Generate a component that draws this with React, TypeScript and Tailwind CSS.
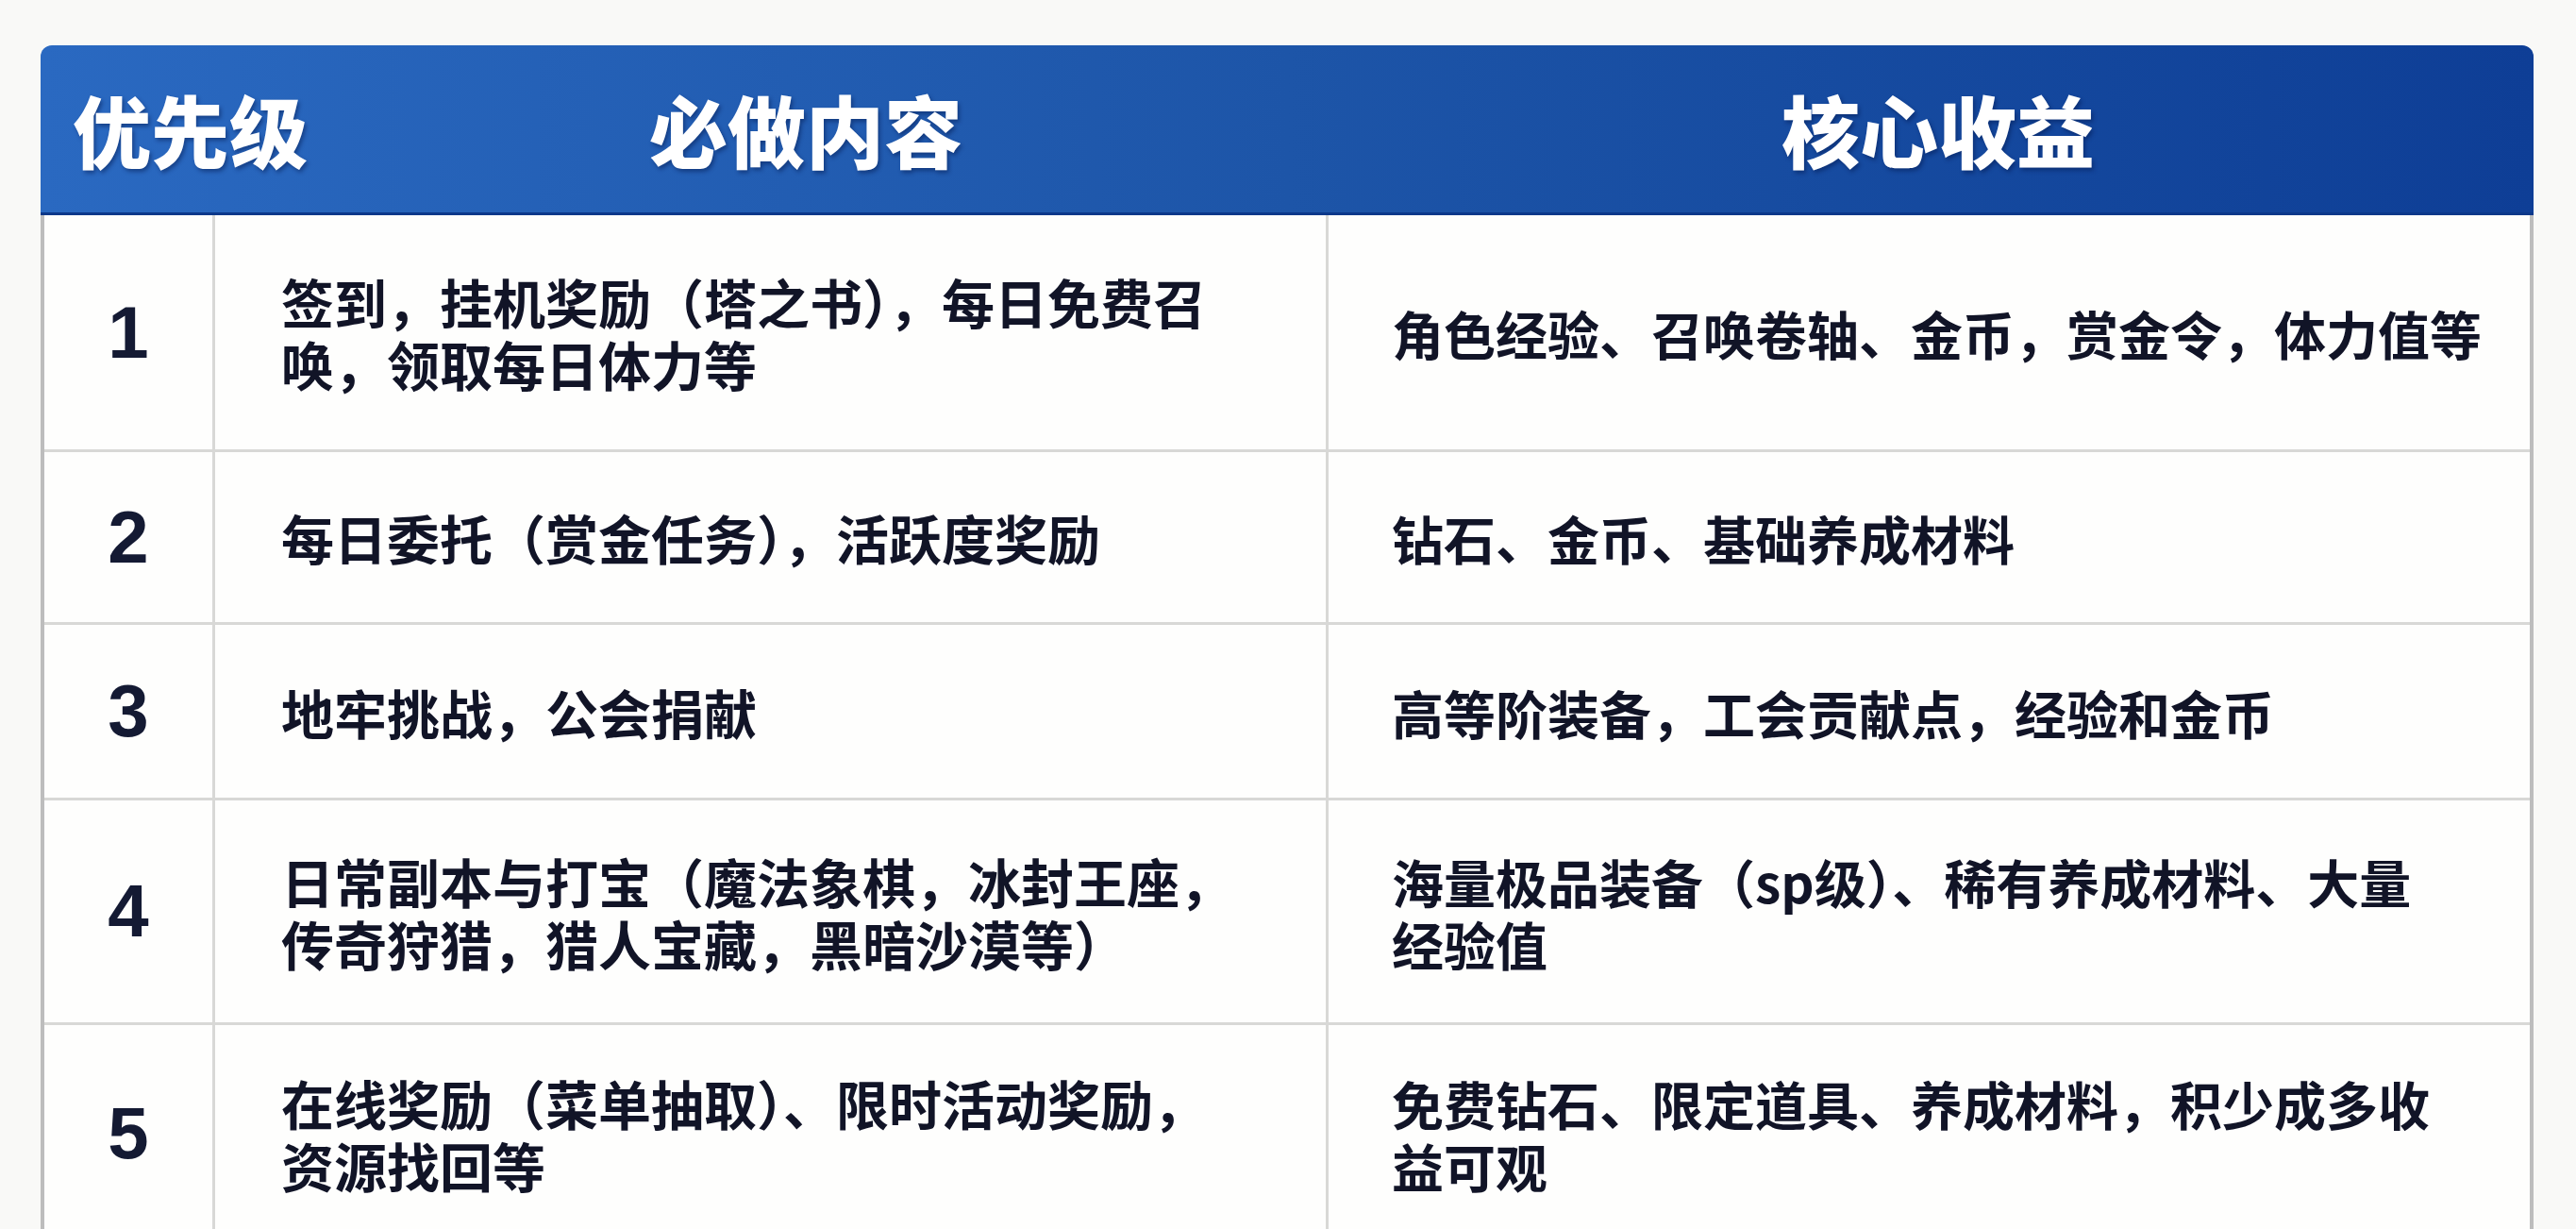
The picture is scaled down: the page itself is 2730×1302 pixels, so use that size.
import React from 'react';

interface Row {
  level: number;
  tasks: string[];
  gains: string[];
  height: string;
}

const rows: Row[] = [
  {
    level: 1,
    tasks: ['签到，挂机奖励（塔之书），每日免费召', '唤，领取每日体力等'],
    gains: ['角色经验、召唤卷轴、金币，赏金令，体力值等'],
    height: 'h-[251px]',
  },
  {
    level: 2,
    tasks: ['每日委托（赏金任务），活跃度奖励'],
    gains: ['钻石、金币、基础养成材料'],
    height: 'h-[183px]',
  },
  {
    level: 3,
    tasks: ['地牢挑战，公会捐献'],
    gains: ['高等阶装备，工会贡献点，经验和金币'],
    height: 'h-[186px]',
  },
  {
    level: 4,
    tasks: ['日常副本与打宝（魔法象棋，冰封王座，', '传奇狩猎，猎人宝藏，黑暗沙漠等）'],
    gains: ['海量极品装备（sp级）、稀有养成材料、大量', '经验值'],
    height: 'h-[238px]',
  },
  {
    level: 5,
    tasks: ['在线奖励（菜单抽取）、限时活动奖励，', '资源找回等'],
    gains: ['免费钻石、限定道具、养成材料，积少成多收', '益可观'],
    height: 'h-[232px]',
  },
];

const cjk = "font-['Noto_Sans_CJK_SC','Noto_Sans',sans-serif]";

function Lines({ lines, size }: { lines: string[]; size: string }) {
  return (
    <div className={`${cjk} font-semibold ${size} leading-[66px] text-[#111427] whitespace-nowrap`}>
      {lines.map((line, i) => (
        <div key={i}>{line}</div>
      ))}
    </div>
  );
}

export default function App() {
  return (
    <div className="min-h-screen bg-[#f9f9f7] pt-[48px] px-[43px]">
      <div className="w-[2642px]">
        {/* header */}
        <div className="flex items-center h-[180px] rounded-t-[12px] bg-linear-to-r from-[#2a69c1] via-[#1d55a8] to-[#0e3e96] border-b-[3px] border-[#0c388a] text-white font-black text-[83px] leading-none [text-shadow:2px_3px_4px_rgba(0,20,70,0.45)]">
          <div className={`${cjk} w-[645px] pl-[34px]`}>优先级</div>
          <div className={`${cjk} w-[1200px]`}>必做内容</div>
          <div className={cjk}>核心收益</div>
        </div>

        {/* body */}
        <div className="bg-[#fefefd] border-x-[4px] border-[#bdbdbd]">
          {rows.map((row) => (
            <div
              key={row.level}
              className={`grid grid-cols-[181px_1180px_1fr] border-b-[3px] border-[#d8d8d6] ${row.height}`}
            >
              <div className="flex items-center justify-center border-r-[3px] border-[#d8d8d6] font-['Liberation_Sans',Arial,sans-serif] font-bold text-[78px] text-[#141a33]">
                {row.level}
              </div>
              <div className="flex items-center pl-[70px] border-r-[3px] border-[#d8d8d6]">
                <Lines lines={row.tasks} size="text-[56px]" />
              </div>
              <div className="flex items-center pl-[67px]">
                <Lines lines={row.gains} size="text-[55px]" />
              </div>
            </div>
          ))}
        </div>
      </div>
    </div>
  );
}
